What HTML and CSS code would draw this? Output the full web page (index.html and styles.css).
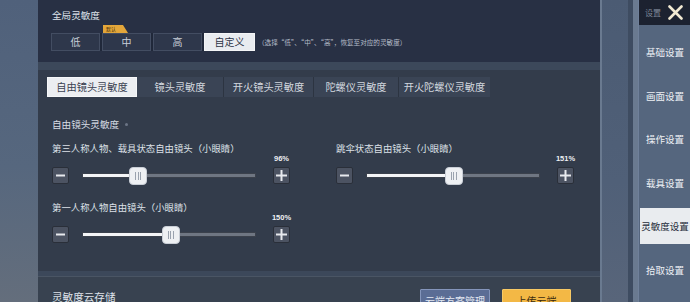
FILE: index.html
```html
<!DOCTYPE html>
<html lang="zh">
<head>
<meta charset="utf-8">
<link rel="stylesheet" href="styles.css">
</head>
<body>
<div class="screen">
  <div class="gutter-left"></div>
  <main class="content">
    <section class="panel panel-global">
      <div class="panel-title">全局灵敏度</div>
      <div class="preset-row">
        <div class="segments">
          <button class="seg">低</button>
          <button class="seg seg-default">中<span class="badge">默认</span></button>
          <button class="seg">高</button>
          <button class="seg active">自定义</button>
        </div>
        <span class="hint">（选择“低”、“中”、“高”，恢复至对应的灵敏度）</span>
      </div>
    </section>

    <section class="panel panel-sens">
      <div class="tabs">
        <div class="tab active t1">自由镜头灵敏度</div>
        <div class="tab t2">镜头灵敏度</div>
        <div class="tab t3">开火镜头灵敏度</div>
        <div class="tab t4">陀螺仪灵敏度</div>
        <div class="tab t5">开火陀螺仪灵敏度</div>
      </div>
      <div class="section-label">自由镜头灵敏度<span class="dot"></span></div>
      <div class="grid">
        <div class="item">
          <div class="item-label">第三人称人物、载具状态自由镜头（小眼睛）</div>
          <div class="slider">
            <div class="btn minus"><svg width="9" height="9" viewBox="0 0 9 9"><rect x="0" y="3.5" width="9" height="2" fill="#e8eaee"/></svg></div>
            <div class="track-wrap">
              <div class="track">
                <div class="fill" style="width:32%"></div>
                <div class="thumb" style="left:calc(32% - 9px)"><i></i><i></i><i></i></div>
              </div>
            </div>
            <div class="plus-col">
              <span class="pct">96%</span>
              <div class="btn plus"><svg width="11" height="11" viewBox="0 0 11 11"><rect x="0" y="4.5" width="11" height="2" fill="#e8eaee"/><rect x="4.5" y="0" width="2" height="11" fill="#e8eaee"/></svg></div>
            </div>
          </div>
        </div>
        <div class="item">
          <div class="item-label">跳伞状态自由镜头（小眼睛）</div>
          <div class="slider">
            <div class="btn minus"><svg width="9" height="9" viewBox="0 0 9 9"><rect x="0" y="3.5" width="9" height="2" fill="#e8eaee"/></svg></div>
            <div class="track-wrap">
              <div class="track">
                <div class="fill" style="width:50.5%"></div>
                <div class="thumb" style="left:calc(50.5% - 9px)"><i></i><i></i><i></i></div>
              </div>
            </div>
            <div class="plus-col">
              <span class="pct">151%</span>
              <div class="btn plus"><svg width="11" height="11" viewBox="0 0 11 11"><rect x="0" y="4.5" width="11" height="2" fill="#e8eaee"/><rect x="4.5" y="0" width="2" height="11" fill="#e8eaee"/></svg></div>
            </div>
          </div>
        </div>
        <div class="item">
          <div class="item-label">第一人称人物自由镜头（小眼睛）</div>
          <div class="slider">
            <div class="btn minus"><svg width="9" height="9" viewBox="0 0 9 9"><rect x="0" y="3.5" width="9" height="2" fill="#e8eaee"/></svg></div>
            <div class="track-wrap">
              <div class="track">
                <div class="fill" style="width:51%"></div>
                <div class="thumb" style="left:calc(51% - 9px)"><i></i><i></i><i></i></div>
              </div>
            </div>
            <div class="plus-col">
              <span class="pct">150%</span>
              <div class="btn plus"><svg width="11" height="11" viewBox="0 0 11 11"><rect x="0" y="4.5" width="11" height="2" fill="#e8eaee"/><rect x="4.5" y="0" width="2" height="11" fill="#e8eaee"/></svg></div>
            </div>
          </div>
        </div>
      </div>
    </section>

    <section class="panel panel-cloud">
      <div class="cloud-title">灵敏度云存储</div>
      <div class="cloud-actions">
        <button class="cbtn manage">云端方案管理</button>
        <button class="cbtn upload">上传云端</button>
      </div>
    </section>
  </main>
  <div class="gutter-mid"><div class="stripe"></div></div>
  <aside class="sidebar">
    <div class="closebar">
      <span class="close-label">设置</span>
      <svg class="close-x" width="15" height="15" viewBox="0 0 15 15"><path d="M1.5 1.5 L13.5 13.5 M13.5 1.5 L1.5 13.5" stroke="#f1e9d2" stroke-width="2.6" stroke-linecap="round"/></svg>
    </div>
    <nav class="menu">
      <div class="menu-item">基础设置</div>
      <div class="menu-item">画面设置</div>
      <div class="menu-item">操作设置</div>
      <div class="menu-item">载具设置</div>
      <div class="menu-item active">灵敏度设置</div>
      <div class="menu-item">拾取设置</div>
      <div class="menu-item">声音设置</div>
    </nav>
  </aside>
</div>
</body>
</html>
```

FILE: styles.css
```css
* { box-sizing: border-box; }
html, body {
  margin: 0;
  padding: 0;
}
body {
  width: 690px;
  height: 302px;
  overflow: hidden;
  font-family: "Noto Sans CJK SC", "Noto Sans", sans-serif;
  background: linear-gradient(180deg, #4e5e76 0%, #55647a 60%, #5d6878 100%);
  color: #dfe3ea;
}
.screen {
  display: flex;
  width: 690px;
  height: 302px;
}
.gutter-left {
  width: 38px;
  flex: none;
  background: linear-gradient(180deg, #50617b 0%, #56677e 55%, #646e7c 100%);
}
.content {
  width: 562px;
  flex: none;
  display: flex;
  flex-direction: column;
  background: #3c485a;
}
.panel {
  flex: none;
}

/* global panel */
.panel-global {
  height: 62px;
  background: #283044;
  padding: 9px 14px 0 13px;
}
.panel-title {
  font-size: 9.6px;
  line-height: 12px;
  color: #dde2ea;
  padding-left: 1px;
}
.preset-row {
  display: flex;
  align-items: center;
  margin-top: 12px;
}
.segments {
  display: flex;
  gap: 2px;
  background: #20283a;
  padding: 0;
}
.seg {
  position: relative;
  width: 49px;
  height: 18px;
  border: 1px solid #434d62;
  background: #2e374b;
  color: #c9cfd9;
  font-family: inherit;
  font-size: 10px;
  line-height: 16px;
  padding: 0;
  text-align: center;
}
.seg.active {
  width: 51px;
  background: #e9ecf0;
  border-color: #f4f5f7;
  color: #2c3344;
}
.badge {
  position: absolute;
  left: 0;
  top: -9px;
  width: 25px;
  height: 8px;
  background: #e3a63a;
  color: #4a3008;
  font-size: 5px;
  line-height: 8px;
  text-align: left;
  padding-left: 3px;
  clip-path: polygon(0 0, 80% 0, 100% 100%, 0 100%);
}
.hint {
  margin-left: 3px;
  font-size: 6.6px;
  color: #b5bdc9;
  white-space: nowrap;
}

/* sensitivity panel */
.panel-sens {
  margin-top: 8px;
  height: 201px;
  background: #333c4b;
  padding: 7px 0 0 14px;
}
.tabs {
  display: flex;
  margin-left: -5px;
  width: 443px;
  height: 20px;
  background: #3a4455;
}
.tab {
  height: 20px;
  font-size: 10.2px;
  line-height: 20px;
  color: #d2d7df;
  text-align: center;
  border-right: 1px solid #2c3441;
}
.tab.active {
  background: #eceef1;
  color: #3a4150;
  border: 1px solid #f6f7f8;
  line-height: 18px;
}
.t1 { width: 90px; }
.t2 { width: 87px; }
.t3 { width: 90px; }
.t4 { width: 85px; }
.t5 { width: 91px; border-right: none; }
.section-label {
  margin-top: 20px;
  font-size: 9.6px;
  line-height: 14px;
  color: #d8dde5;
  display: flex;
  align-items: center;
}
.dot {
  width: 3px;
  height: 3px;
  border-radius: 50%;
  background: #6c7586;
  margin-left: 6px;
}
.grid {
  display: grid;
  grid-template-columns: 238px 238px;
  column-gap: 46px;
  row-gap: 17px;
  margin-top: 11px;
}
.item-label {
  font-size: 9.4px;
  line-height: 12px;
  color: #dde1e8;
  white-space: nowrap;
}
.slider {
  display: flex;
  align-items: flex-end;
}
.btn {
  width: 17px;
  height: 17px;
  flex: none;
  display: flex;
  align-items: center;
  justify-content: center;
  background: #4c5362;
  border: 1px solid #2a2f39;
  border-radius: 2px;
}
.minus {
  margin-right: 13px;
}
.track-wrap {
  width: 174px;
  height: 17px;
  flex: none;
  display: flex;
  align-items: center;
}
.track {
  position: relative;
  width: 100%;
  height: 5px;
  background: #6f7682;
  border: 1px solid #3b414c;
}
.fill {
  height: 100%;
  background: #f4f5f7;
}
.thumb {
  position: absolute;
  top: -7.5px;
  width: 18px;
  height: 18px;
  background: #eef0f3;
  border: 1px solid #c9ced6;
  border-radius: 4px;
  display: flex;
  justify-content: center;
  align-items: center;
  gap: 1.5px;
}
.thumb i {
  width: 1px;
  height: 8px;
  background: #9aa2ae;
}
.plus-col {
  margin-left: 17px;
  width: 17px;
  display: flex;
  flex-direction: column;
  align-items: center;
}
.pct {
  font-size: 7.5px;
  line-height: 10px;
  color: #eef0f3;
  font-family: "Liberation Sans", "DejaVu Sans", sans-serif;
  font-weight: bold;
  margin-bottom: 3px;
  white-space: nowrap;
}

/* cloud panel */
.panel-cloud {
  margin-top: 5px;
  flex: 1;
  background: #384250;
  display: flex;
  padding: 12px 29px 0 14px;
  border-top: 1px solid #4a5564;
}
.cloud-title {
  font-size: 10.6px;
  line-height: 13px;
  padding-top: 1px;
  color: #dfe3ea;
}
.cloud-actions {
  margin-left: auto;
  display: flex;
  gap: 12px;
}
.cbtn {
  width: 70px;
  height: 22px;
  font-family: inherit;
  font-size: 10px;
  padding: 0;
  border-radius: 1px;
}
.manage {
  background: #5b6d95;
  border: 1px solid #8495bb;
  color: #e4e9f3;
}
.upload {
  width: 69px;
  background: #f3b845;
  border: 1px solid #f7c965;
  color: #3b2a0e;
}

/* mid gutter */
.gutter-mid {
  width: 38px;
  flex: none;
  display: flex;
  padding-left: 2px;
  background: #6a7a90;
}
.stripe {
  width: 31px;
  background: linear-gradient(180deg, #4b5b73 0%, #506078 60%, #58657a 100%);
  border-right: 5px solid #3e4c61;
}

/* sidebar */
.sidebar {
  width: 52px;
  flex: none;
  background: #55667e;
  border-left: 1px solid #6f809a;
}
.closebar {
  height: 25px;
  background: #1c2230;
  display: flex;
  align-items: center;
  padding-left: 6px;
}
.close-label {
  font-size: 8px;
  color: #7f8899;
}
.close-x {
  margin-left: 7px;
}
.menu {
  display: flex;
  flex-direction: column;
  gap: 7.5px;
  padding-top: 9px;
  margin-left: 1px;
}
.menu-item {
  width: 50px;
  height: 36px;
  flex: none;
  font-size: 9.5px;
  line-height: 36px;
  color: #eef1f5;
  text-align: center;
  white-space: nowrap;
}
.menu-item.active {
  background: #e9ecef;
  color: #262c3a;
}
```
